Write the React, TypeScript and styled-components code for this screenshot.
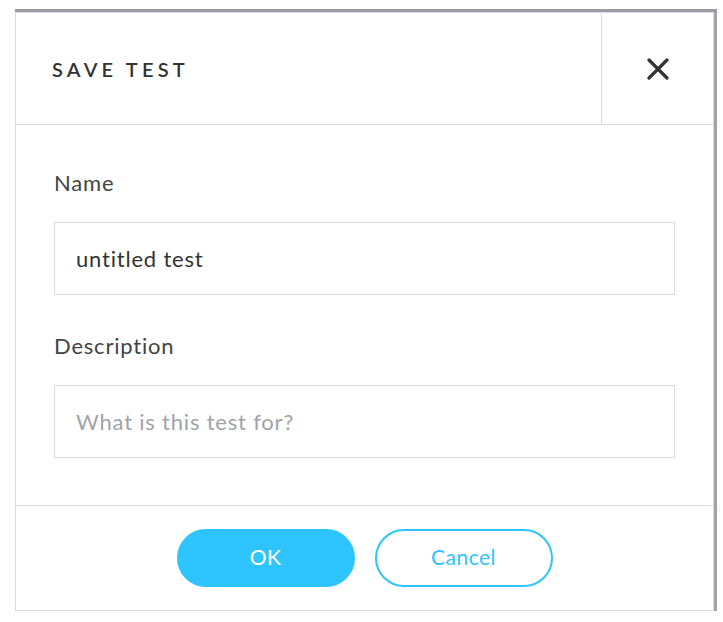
import React from "react";
import styled, { createGlobalStyle } from "styled-components";

const Global = createGlobalStyle`
  html, body { margin: 0; padding: 0; background: #ffffff; }
  body { font-family: Lato, "Open Sans", sans-serif; }
`;

const Page = styled.div`
  padding: 12px 9px 0 15px;
`;

const Dialog = styled.div`
  width: 697px;
  border: 1px solid #dcdce8;
  background: #fff;
  box-shadow: 3px 0 0 #a3a3a6, 0 -3px 0 #9c9ca0, 0 2px 0 #a3a3a6, 3px -3px 0 #9c9ca0, 3px 2px 0 #a3a3a6;
`;

const Header = styled.div`
  display: flex;
  height: 111px;
  border-bottom: 1px solid #dcdce8;
`;

const Title = styled.h2`
  flex: 1;
  margin: 0;
  padding-left: 36px;
  display: flex;
  align-items: center;
  font-size: 20px;
  font-weight: 600;
  letter-spacing: 4.2px;
  color: #333;
`;

const CloseButton = styled.button`
  width: 112px;
  border: none;
  border-left: 1px solid #dcdce8;
  background: transparent;
  display: flex;
  align-items: center;
  justify-content: center;
  padding: 0;
  cursor: pointer;
`;

const Body = styled.div`
  padding: 46px 38px 47px 38px;
  display: flex;
  flex-direction: column;
`;

const Field = styled.div<{ $gap?: number }>`
  display: flex;
  flex-direction: column;
  margin-top: ${(p) => p.$gap ?? 0}px;
`;

const Label = styled.label`
  font-size: 22px;
  line-height: 24px;
  letter-spacing: 0.8px;
  color: #444;
  margin-bottom: 27px;
`;

const Input = styled.input`
  box-sizing: border-box;
  height: 73px;
  width: 100%;
  border: 1.5px solid #dcdce8;
  padding: 0 21px;
  font-family: Lato, "Open Sans", sans-serif;
  font-size: 22px;
  letter-spacing: 0.8px;
  color: #333;
  outline: none;
  &::placeholder { color: #9ea3ab; }
`;

const Footer = styled.div`
  border-top: 1px solid #dcdce8;
  height: 104px;
  display: flex;
  align-items: center;
  justify-content: center;
  gap: 20px;
`;

const Btn = styled.button<{ $primary?: boolean }>`
  box-sizing: border-box;
  width: 178px;
  height: 58px;
  padding: 0 0 3px;
  border-radius: 29px;
  border: 2px solid #2ec5ff;
  background: ${(p) => (p.$primary ? "#2ec5ff" : "#fff")};
  color: ${(p) => (p.$primary ? "#fff" : "#2ec5ff")};
  font-family: Lato, "Open Sans", sans-serif;
  font-size: 21px;
  letter-spacing: 0.5px;
  cursor: pointer;
`;

export default function App() {
  return (
    <>
      <Global />
      <Page>
        <Dialog>
          <Header>
            <Title>SAVE TEST</Title>
            <CloseButton aria-label="Close">
              <svg width="22" height="22" viewBox="0 0 22 22">
                <path d="M2 2 L20 20 M20 2 L2 20" stroke="#333" strokeWidth="3.2" strokeLinecap="round" />
              </svg>
            </CloseButton>
          </Header>
          <Body>
            <Field>
              <Label>Name</Label>
              <Input defaultValue="untitled test" />
            </Field>
            <Field $gap={39}>
              <Label>Description</Label>
              <Input placeholder="What is this test for?" />
            </Field>
          </Body>
          <Footer>
            <Btn $primary>OK</Btn>
            <Btn>Cancel</Btn>
          </Footer>
        </Dialog>
      </Page>
    </>
  );
}
